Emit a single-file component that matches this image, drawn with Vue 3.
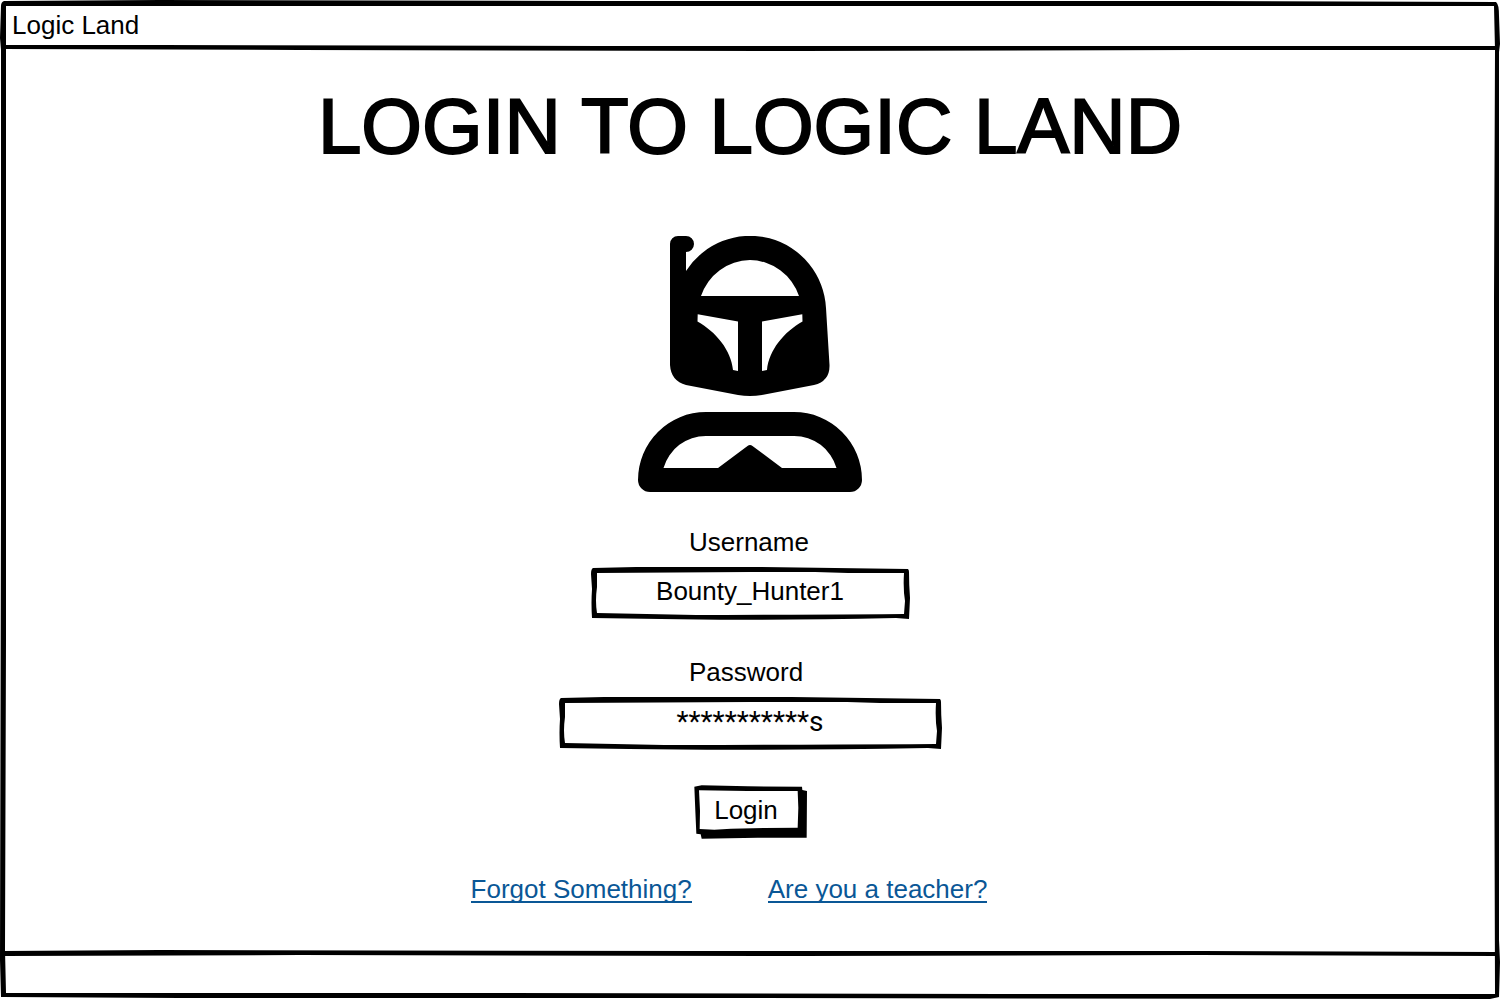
<script setup>
import { ref } from 'vue'

const username = ref('Bounty_Hunter1')
const password = ref('***********s')

// Hand-drawn box outline, w by 53 pixels, drawn as outer edge minus inner edge.
function sketchBox(w) {
  return [
    `M2 1 L45 0 H${w - 150} L${w - 2} 2 Q${w - 1} 3 ${w - 1} 5 Q${w - 1} 18 ${w} 31 L${w - 1} 52 L${w - 14} 51`,
    `Q${w / 2} 54 70 52 L1 51 Q0 36 1 22 L0 7 Q0 2 2 1Z`,
    `M6 6 L${w / 2} 5 L${w - 95} 5 L${w - 62} 6 L${w - 6} 6 Q${w - 7} 22 ${w - 5} 34 L${w - 6} 47`,
    `Q${w / 2} 48 105 48 L6 46 Q4 34 6 20Z`,
  ].join(' ')
}

const fields = [
  { id: 'username', label: 'Username', model: username, width: 319 },
  { id: 'password', label: 'Password', model: password, width: 383 },
]
</script>

<template>
  <div class="window">
    <svg class="frame" viewBox="0 0 1500 1000" preserveAspectRatio="none" aria-hidden="true">
      <path
        fill-rule="evenodd"
        d="M4 1 L160 0 L600 1 L1200 1 L1496 2 Q1499 4 1499 16 L1500 44 L1499 52 L1499 500 L1499 940 L1500 962 L1499 997 L1490 999 L700 998 L180 998 L1 997 L0 960 L1 500 L1 50 L0 38 L1 6 Q1 2 4 1Z
           M6 6 L300 6 L700 6 L1200 6 L1494 6 L1495 50 L1494 300 L1494 640 L1495 994 L1000 994 L500 993 L6 993 L5 950 L6 640 L6 300 L6 50Z"
      />
    </svg>

    <header class="bar bar-top">
      <span>Logic Land</span>
      <svg class="rule" viewBox="0 0 1500 6" preserveAspectRatio="none" aria-hidden="true">
        <path d="M3 1 L160 1 L600 2 L1200 2 L1497 2 L1497 6 L1200 6 L800 7 L300 6 L3 5Z" />
      </svg>
    </header>

    <main>
      <h1>LOGIN TO LOGIC LAND</h1>

      <svg class="hunter" viewBox="638 236 224 256" role="img" aria-label="Bounty hunter">
        <path
          fill-rule="evenodd"
          d="M670 244 A8 8 0 0 1 678 236 H686 A8 8 0 0 1 686 252 V271 A76 76 0 0 1 826 308 L829.500 365 Q830 381 814 385 L762 395 Q750 397 738 395 L686 385 Q671 381 670 365Z
             M701 296 A52.500 52.500 0 0 1 750 260 A52.500 52.500 0 0 1 799 296Z
             M697.700 314.300 L738 321.500 V371 L733 370 C731 350 716 332 697.500 321.500Z
             M802.300 314.300 L762 321.500 V371 L767 370 C769 350 784 332 802.500 321.500Z"
        />
        <path
          fill-rule="evenodd"
          d="M638 480 A68 68 0 0 1 706 412 H794 A68 68 0 0 1 862 480 A12 12 0 0 1 850 492 H650 A12 12 0 0 1 638 480Z
             M663.500 468 A44 44 0 0 1 706 436 H794 A44 44 0 0 1 836.500 468 H782 L752.500 446 Q750 444 747.500 446 L718 468Z"
        />
      </svg>

      <form @submit.prevent>
        <div v-for="f in fields" :key="f.id" class="field">
          <label :for="f.id">{{ f.label }}</label>
          <div class="box" :class="f.id">
            <svg :viewBox="`0 0 ${f.width} 53`" preserveAspectRatio="none" aria-hidden="true">
              <path fill-rule="evenodd" :d="sketchBox(f.width)" />
            </svg>
            <input :id="f.id" v-model="f.model.value" type="text" autocomplete="off" />
          </div>
        </div>

        <button type="submit">
          <svg viewBox="39 42 339 162" preserveAspectRatio="none" aria-hidden="true">
            <path
              fill-rule="evenodd"
              d="M40 47 L62 43 L200 46 L363 47 L364 57 L378 60 L377 200 L230 200 L62 203 L59 190 L46 188 L43 120Z
                 M54 58 L200 60 L350 60 L352 110 L350 170 L250 171 L150 173 L100 176 L56 174 L57 120Z"
            />
          </svg>
          <span>Login</span>
        </button>
      </form>

      <nav>
        <a href="#forgot">Forgot Something?</a>
        <a href="#teacher">Are you a teacher?</a>
      </nav>
    </main>

    <footer class="bar bar-bottom">
      <svg class="rule" viewBox="0 0 1500 6" preserveAspectRatio="none" aria-hidden="true">
        <path d="M3 1 L160 0 L700 1 L1200 1 L1497 2 L1497 6 L1200 5 L800 6 L300 5 L3 6Z" />
      </svg>
    </footer>
  </div>
</template>

<style>
body {
  margin: 0;
  background: #fff;
}
</style>

<style scoped>
.window {
  position: relative;
  display: flex;
  flex-direction: column;
  min-height: 100vh;
  box-sizing: border-box;
  font: 26px/32px "Liberation Sans", Arial, sans-serif;
  color: #000;
}

.frame {
  position: absolute;
  inset: 0;
  width: 100%;
  height: 100%;
  pointer-events: none;
}

.bar {
  position: relative;
  box-sizing: border-box;
  height: 50px;
  padding: 9px 12px;
}

.rule {
  position: absolute;
  left: 0;
  width: 100%;
  height: 6px;
  overflow: visible;
}

.bar-top .rule {
  bottom: 0;
}

.bar-bottom .rule {
  top: 0;
}

main {
  flex: 1;
  display: flex;
  flex-direction: column;
  align-items: center;
  padding-top: 31px;
}

h1 {
  margin: 0;
  font-size: 78px;
  line-height: 90px;
  font-weight: 400;
  text-align: center;
  -webkit-text-stroke: 2px #000;
}

.hunter {
  width: 224px;
  height: 256px;
  margin-top: 65px;
}

form {
  display: flex;
  flex-direction: column;
  align-items: center;
  gap: 35px;
  margin-top: 33px;
}

.field {
  display: flex;
  flex-direction: column;
  align-items: center;
  gap: 8px;
}

label {
  width: 122px;
  line-height: 34px;
}

.box {
  position: relative;
  height: 53px;
}

.box.username {
  width: 319px;
}

.box.password {
  width: 383px;
}

.box svg,
button svg {
  position: absolute;
  inset: 0;
  width: 100%;
  height: 100%;
  pointer-events: none;
}

input {
  display: block;
  box-sizing: border-box;
  width: 100%;
  height: 100%;
  margin: 0;
  padding: 0 8px 5px;
  border: 0;
  background: none;
  font: inherit;
  color: inherit;
  text-align: center;
  outline: none;
}

.password input {
  font-family: Roboto, sans-serif;
  font-size: 28px;
}

button {
  position: relative;
  width: 113px;
  height: 54px;
  margin: 0;
  padding: 0 8px 5px 0;
  border: 0;
  background: none;
  font: inherit;
  color: inherit;
  cursor: pointer;
}

nav {
  display: flex;
  gap: 76px;
  margin-top: 34px;
  padding-right: 42px;
}

a {
  height: 28px;
  border-bottom: 2px solid #0a5796;
  color: #0a5796;
  text-decoration: none;
}
</style>
